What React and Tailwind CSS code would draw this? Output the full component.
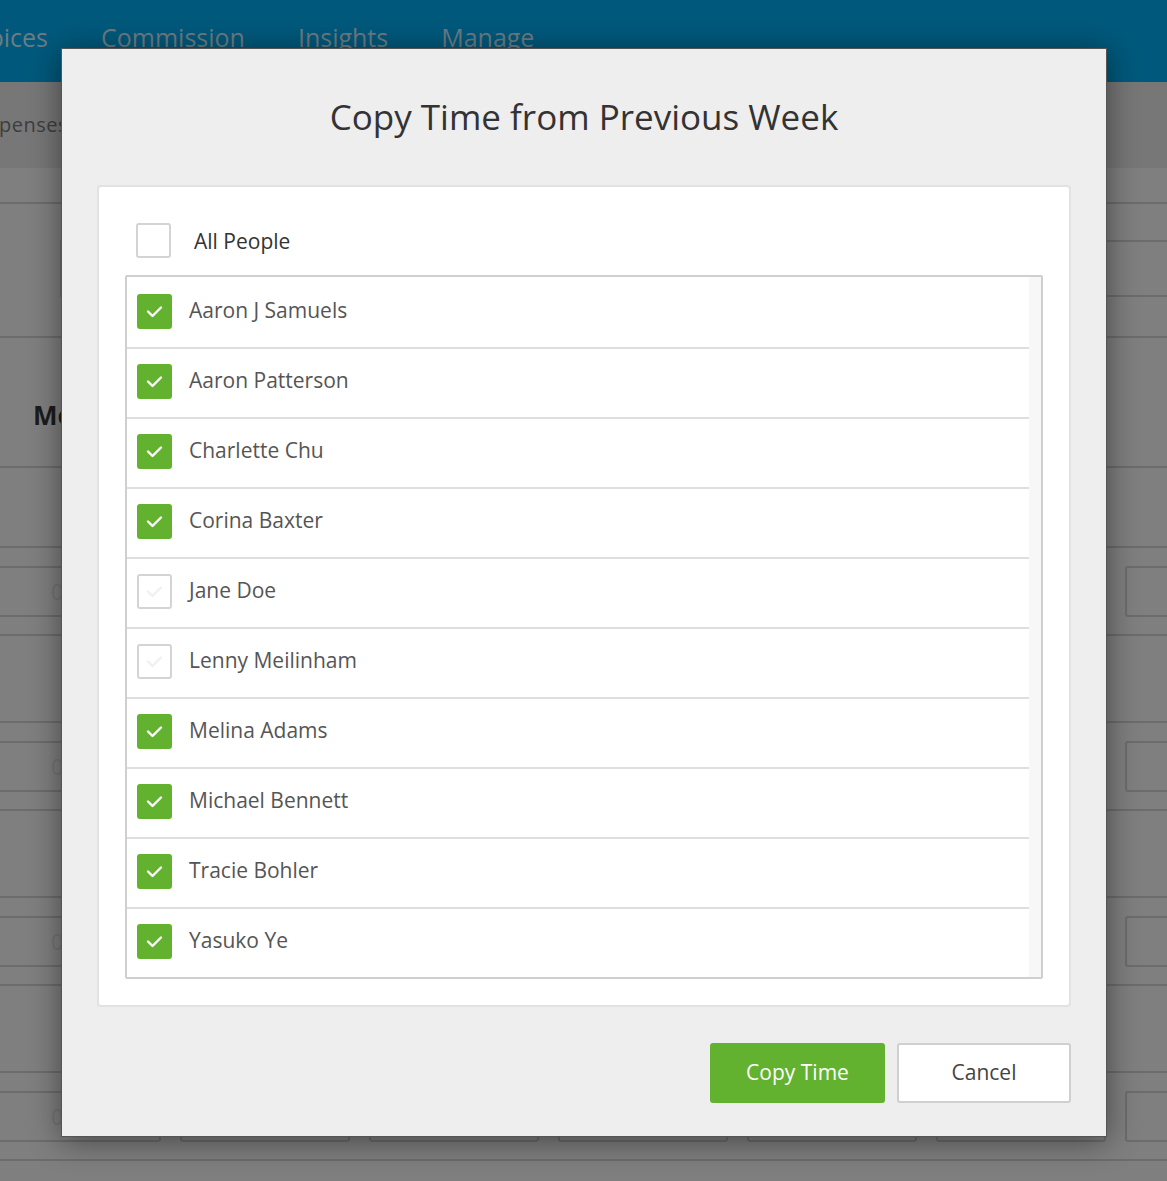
import React from 'react';

const people = [
  { name: 'Aaron J Samuels', checked: true },
  { name: 'Aaron Patterson', checked: true },
  { name: 'Charlette Chu', checked: true },
  { name: 'Corina Baxter', checked: true },
  { name: 'Jane Doe', checked: false },
  { name: 'Lenny Meilinham', checked: false },
  { name: 'Melina Adams', checked: true },
  { name: 'Michael Bennett', checked: true },
  { name: 'Tracie Bohler', checked: true },
  { name: 'Yasuko Ye', checked: true },
];

// caja de verificación verde / vacía
function CheckBox({ checked, plain }) {
  return (
    <div
      className={
        checked
          ? 'w-[35px] h-[35px] shrink-0 rounded-[3px] bg-[#62b22f] flex items-center justify-center'
          : 'w-[35px] h-[35px] shrink-0 rounded-[3px] bg-white border-2 border-[#d4d4d4] flex items-center justify-center'
      }
    >
      {!plain && (
        <svg width="35" height="35" viewBox="0 0 35 35" className={checked ? '' : '-m-[2px]'}>
          <polyline
            points="11,17.5 15.5,22 24,13.5"
            fill="none"
            stroke={checked ? '#ffffff' : '#f0f0f0'}
            strokeWidth="2.4"
            strokeLinecap="round"
            strokeLinejoin="round"
          />
        </svg>
      )}
    </div>
  );
}

// fila del fondo con las cajas de horas
function BgRow() {
  const cols = [0, 1, 2, 3, 4, 5, 6];
  return (
    <div className="h-[90px] border-y-2 border-[#6c6c6c] flex items-center gap-[19px] -ml-[9px]">
      {cols.map((c) => (
        <div
          key={c}
          className="w-[170px] h-[51px] shrink-0 rounded-[3px] border-2 border-[#6c6c6c] flex items-center pl-[58px] text-[22px] text-[#747474]"
        >
          {c === 0 ? '0' : ''}
        </div>
      ))}
    </div>
  );
}

export default function App() {
  return (
    <div className="relative w-full h-[1181px] overflow-hidden bg-[#7f7f7f] font-['Open_Sans',sans-serif]">
      {/* ----- página de fondo (atenuada) ----- */}
      <header className="h-[82px] bg-[#00597c] flex items-start pt-[19px] gap-[53px] text-[25px] text-[#6c7c83] whitespace-nowrap">
        <div className="w-[48px] flex justify-end">
          <span>Invoices</span>
        </div>
        <span>Commission</span>
        <span>Insights</span>
        <span>Manage</span>
      </header>

      <div className="h-[86px] bg-[#777777] flex items-center whitespace-nowrap">
        <div className="w-[68px] flex justify-end text-[20px] text-[#3e3e3e] tracking-[0.5px]">
          <span>Expenses</span>
        </div>
      </div>

      <div className="h-[36px] border-b-2 border-[#6c6c6c]" />

      <div className="h-[134px] border-b-2 border-[#6c6c6c] pt-[36px]">
        <div className="ml-[60px] h-[57px] border-2 border-[#6c6c6c] border-r-0" />
      </div>

      <div className="h-[130px] border-b-2 border-[#6c6c6c] flex items-center pl-[33px] pt-[26px]">
        <span className="text-[26px] font-bold text-[#1c1c1c]">Monday</span>
      </div>

      <div className="h-[78px]" />

      <div className="flex flex-col gap-[85px]">
        <BgRow />
        <BgRow />
        <BgRow />
        <BgRow />
      </div>

      {/* ----- modal ----- */}
      <div className="absolute left-[61px] top-[48px] w-[1046px] h-[1089px] bg-[#eeeeee] border border-[#555555] shadow-[0_4px_30px_rgba(0,0,0,0.45)] px-[35px] flex flex-col">
        <h2 className="h-[136px] flex items-center justify-center text-[35px] text-[#333333]">
          Copy Time from Previous Week
        </h2>

        <div className="bg-white border-2 border-[#e2e2e2] rounded-[4px] px-[26px] pt-[35px] pb-[26px]">
          <div className="flex items-center pl-[11px] h-[37px] mb-[16px]">
            <CheckBox checked={false} plain />
            <span className="ml-[23px] text-[21px] text-[#333333] pt-[3px]">All People</span>
          </div>

          <div className="border-2 border-[#cfcfcf] rounded-[2px] flex">
            <div className="flex-1">
              {people.map((p, i) => (
                <div
                  key={p.name}
                  className={
                    i === 0
                      ? 'h-[70px] flex items-start pl-[10px] pt-[17px]'
                      : 'h-[70px] flex items-start pl-[10px] pt-[15px] border-t-2 border-[#dedede]'
                  }
                >
                  <CheckBox checked={p.checked} />
                  <span className="ml-[17px] text-[21px] text-[#555555] leading-[35px] -mt-[1px]">{p.name}</span>
                </div>
              ))}
            </div>
            <div className="w-[12px] bg-[#f7f7f7]" />
          </div>
        </div>

        <div className="flex justify-end gap-[12px] mt-[36px]">
          <button className="w-[175px] h-[60px] rounded-[3px] bg-[#62b22f] text-white text-[21px]">
            Copy Time
          </button>
          <button className="w-[174px] h-[60px] rounded-[3px] bg-white border-2 border-[#d0d0d0] text-[#444444] text-[21px]">
            Cancel
          </button>
        </div>
      </div>
    </div>
  );
}
